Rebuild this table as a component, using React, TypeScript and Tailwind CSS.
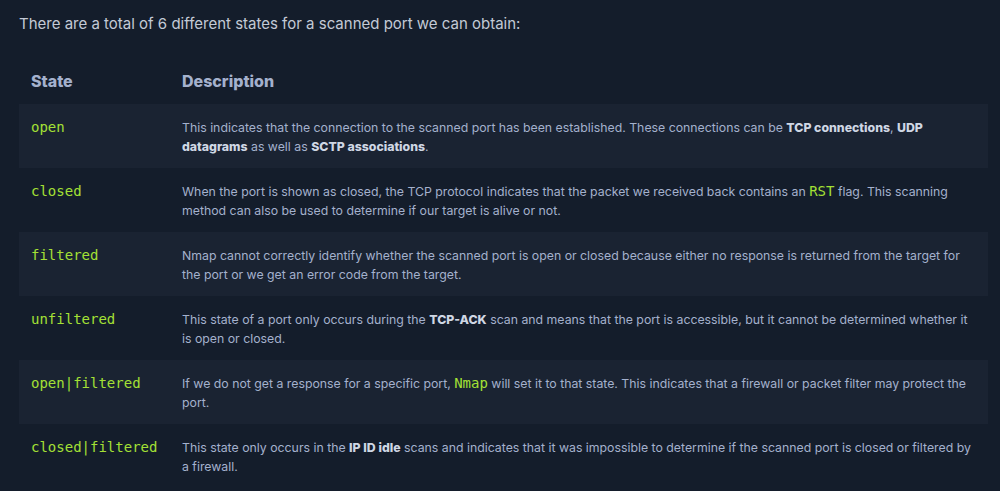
import React from "react"

type Row = { state: string; desc: React.ReactNode }

const B = ({ children }: { children: React.ReactNode }) => (
  <strong className="font-extrabold text-[#cfd7e4]">{children}</strong>
)

const G = ({ children }: { children: React.ReactNode }) => (
  <span className="font-['DejaVu_Sans_Mono',monospace] text-[14px] text-[#a4e035]">{children}</span>
)

const rows: Row[] = [
  {
    state: "open",
    desc: (
      <>
        This indicates that the connection to the scanned port has been established. These connections can be{" "}
        <B>TCP connections</B>, <B>UDP datagrams</B> as well as <B>SCTP associations</B>.
      </>
    ),
  },
  {
    state: "closed",
    desc: (
      <>
        When the port is shown as closed, the TCP protocol indicates that the packet we received back contains an{" "}
        <G>RST</G> flag. This scanning method can also be used to determine if our target is alive or not.
      </>
    ),
  },
  {
    state: "filtered",
    desc: (
      <>
        Nmap cannot correctly identify whether the scanned port is open or closed because either no response is
        returned from the target for the port or we get an error code from the target.
      </>
    ),
  },
  {
    state: "unfiltered",
    desc: (
      <>
        This state of a port only occurs during the <B>TCP-ACK</B> scan and means that the port is accessible, but it
        cannot be determined whether it is open or closed.
      </>
    ),
  },
  {
    state: "open|filtered",
    desc: (
      <>
        If we do not get a response for a specific port, <G>Nmap</G> will set it to that state. This indicates that a
        firewall or packet filter may protect the port.
      </>
    ),
  },
  {
    state: "closed|filtered",
    desc: (
      <>
        This state only occurs in the <B>IP ID idle</B> scans and indicates that it was impossible to determine if the
        scanned port is closed or filtered by a firewall.
      </>
    ),
  },
]

export default function App() {
  return (
    <div className="min-h-[491px] w-[1000px] overflow-hidden bg-[#141d2b] font-['Inter',sans-serif]">
      <div className="pl-[19px] pr-[12px] pt-[13px]">
        <p className="text-[15px] leading-[22px] text-[#c3cad6]">
          There are a total of 6 different states for a scanned port we can obtain:
        </p>

        {/* ports table */}
        <table className="mt-[26px] w-[969px] border-collapse text-left">
          <thead>
            <tr>
              <th className="w-[163px] px-[12px] pb-[11px] pt-[8px] text-[16px] font-extrabold leading-[24px] text-[#a4b1cd]">
                State
              </th>
              <th className="px-0 pb-[11px] pt-[8px] text-[16px] font-extrabold leading-[24px] text-[#a4b1cd]">
                Description
              </th>
            </tr>
          </thead>
          <tbody>
            {rows.map((r, i) => (
              <tr key={r.state} className={i % 2 === 0 ? "bg-[#1a2332]" : "bg-[#141d2b]"}>
                <td className="h-[64px] px-[12px] pb-[12px] pt-[13px] align-top font-['DejaVu_Sans_Mono',monospace] text-[14px] leading-[20px] text-[#a4e035]">
                  {r.state}
                </td>
                <td className="h-[64px] pb-[12px] pr-[14px] pt-[14px] align-top text-[12.3px] leading-[19px] text-[#a4b1cd]">
                  {r.desc}
                </td>
              </tr>
            ))}
          </tbody>
        </table>
      </div>
    </div>
  )
}
